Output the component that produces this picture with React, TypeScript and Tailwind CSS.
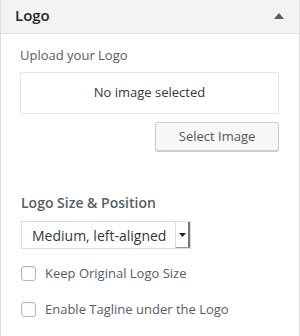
export default function App() {
  return (
    <div className="w-[300px] h-[336px] bg-white font-['Open_Sans',sans-serif] border-x border-[#dddddd] overflow-hidden">
      <div className="h-[34px] bg-[#f3f3f3] border-b border-[#e2e2e2] flex items-center justify-between pl-[14px] pr-[15px]">
        <span className="text-[15px] font-semibold text-[#23282d] leading-none -mt-[2px]">Logo</span>
        <svg width="10" height="6" viewBox="0 0 10 6" className="-mt-[2px]">
          <path d="M0 6 L5 0 L10 6 Z" fill="#555d66" />
        </svg>
      </div>

      <div className="pl-[19px] pr-[20px] pt-[12px]">
        <div className="text-[13px] text-[#555d66] leading-[18px]">Upload your Logo</div>
        <div className="mt-[8px] h-[42px] border border-[#e5e5e5] rounded-[2px] flex items-center justify-center text-[13px] text-[#32373c]">
          No image selected
        </div>
        <div className="flex justify-end mt-[8px]">
          <button className="w-[124px] h-[29px] bg-[#f7f7f7] border border-[#cccccc] rounded-[3px] shadow-[0_1px_0_#cccccc] text-[13px] text-[#555555] leading-none">
            Select Image
          </button>
        </div>

        <div className="mt-[42px] text-[14px] font-semibold text-[#555d66] leading-[20px] pl-[1px]">Logo Size &amp; Position</div>
        <div className="mt-[8px] ml-[1px] w-[170px] h-[28px] border border-[#dddddd] flex items-center justify-between bg-white">
          <span className="pl-[10px] text-[14px] text-[#32373c]">Medium, left-aligned</span>
          <span className="w-[15px] h-[26px] border-l border-[#dddddd] border-r-2 border-r-[#777] border-b border-b-[#999] flex items-center justify-center">
            <svg width="7" height="4" viewBox="0 0 7 4"><path d="M0 0 L7 0 L3.5 4 Z" fill="#222" /></svg>
          </span>
        </div>

        <div className="mt-[15px] flex flex-col gap-[18px]">
          <label className="flex items-center gap-[9px] text-[13px] text-[#555d66] leading-[18px]">
            <span className="w-[15px] h-[15px] ml-[1px] border border-[#b4b9be] rounded-[3px] bg-white shadow-[inset_0_1px_2px_rgba(0,0,0,0.07)]" />
            Keep Original Logo Size
          </label>
          <label className="flex items-center gap-[9px] text-[13px] text-[#555d66] leading-[18px]">
            <span className="w-[15px] h-[15px] ml-[1px] border border-[#b4b9be] rounded-[3px] bg-white shadow-[inset_0_1px_2px_rgba(0,0,0,0.07)]" />
            Enable Tagline under the Logo
          </label>
        </div>
      </div>
    </div>
  );
}
